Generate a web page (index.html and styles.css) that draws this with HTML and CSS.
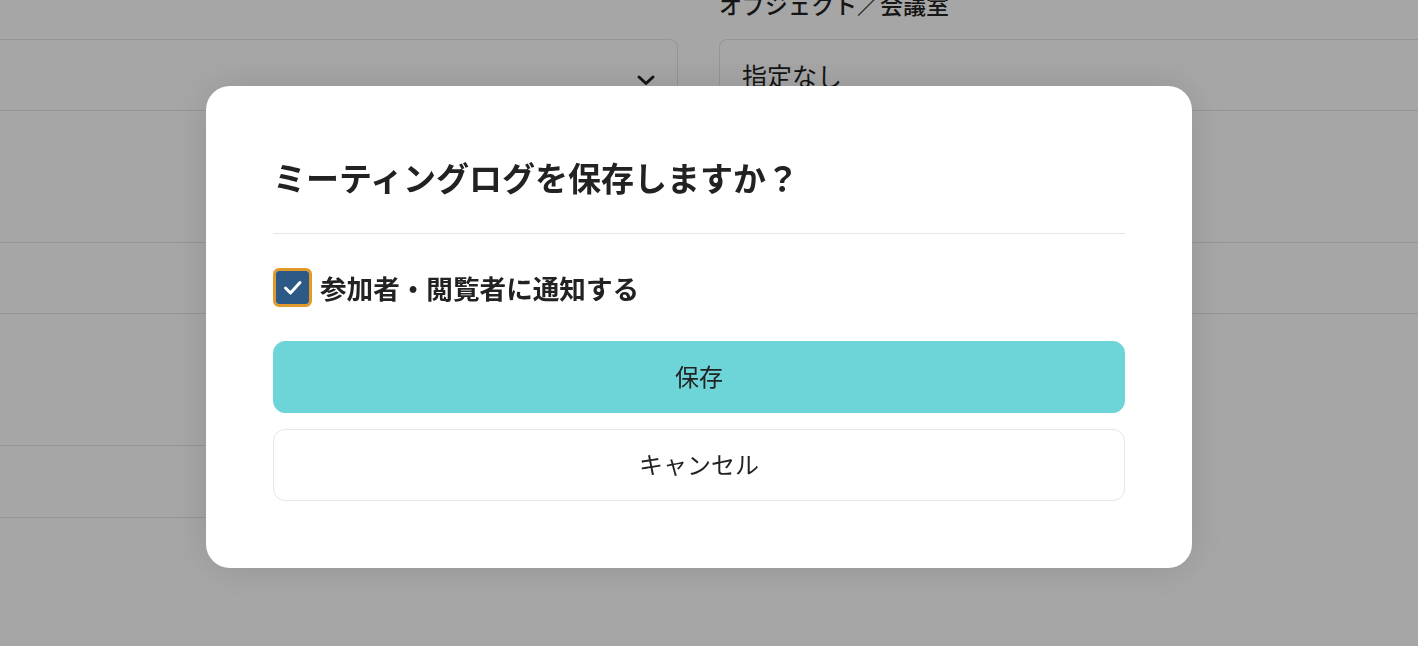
FILE: index.html
```html
<!DOCTYPE html>
<html lang="ja">
<head>
<meta charset="utf-8">
<title>ミーティングログ</title>
<link rel="stylesheet" href="styles.css">
</head>
<body>
<div class="page">
  <div class="form-col col-left">
    <div class="field">
      <div class="label"></div>
      <div class="box select">
        <span class="value"></span>
        <svg class="chevron" viewBox="0 0 20 20" width="20" height="20" aria-hidden="true">
          <path d="M3 7 L10 13.5 L17 7" fill="none" stroke="#1f1f1f" stroke-width="3" stroke-linecap="round" stroke-linejoin="round"/>
        </svg>
      </div>
    </div>
    <div class="field">
      <div class="label"></div>
      <div class="box"></div>
    </div>
    <div class="field">
      <div class="label"></div>
      <div class="box box-tall"></div>
    </div>
  </div>
  <div class="form-col col-right">
    <div class="field">
      <div class="label">オブジェクト／会議室</div>
      <div class="box"><span class="value">指定なし</span></div>
    </div>
    <div class="field">
      <div class="label"></div>
      <div class="box"></div>
    </div>
  </div>
</div>

<div class="overlay">
  <div class="modal" role="dialog" aria-modal="true">
    <h2 class="modal-title">ミーティングログを保存しますか？</h2>
    <hr class="divider">
    <label class="check-row">
      <span class="check-ring">
        <span class="check-box">
          <svg viewBox="0 0 33 33" width="33" height="33" aria-hidden="true">
            <path d="M9.5 17 L14.5 22 L24 11.5" fill="none" stroke="#ffffff" stroke-width="3" stroke-linecap="round" stroke-linejoin="round"/>
          </svg>
        </span>
      </span>
      <span class="check-label">参加者・閲覧者に通知する</span>
    </label>
    <div class="actions">
      <button class="btn btn-primary" type="button">保存</button>
      <button class="btn btn-secondary" type="button">キャンセル</button>
    </div>
  </div>
</div>
</body>
</html>
```

FILE: styles.css
```css
* {
  box-sizing: border-box;
}

html, body {
  margin: 0;
  padding: 0;
  height: 100%;
  overflow: hidden;
  background: #ffffff;
}

body {
  font-family: "Noto Sans CJK JP", "Noto Sans", sans-serif;
  color: #222222;
}

/* Background page */
.page {
  display: flex;
  gap: 41px;
  margin-left: -400px;
  margin-top: -12px;
}

.form-col {
  display: flex;
  flex-direction: column;
  gap: 80px;
}

.col-left {
  width: 1078px;
  flex: none;
}

.col-right {
  width: 1000px;
  flex: none;
}

.field {
  display: flex;
  flex-direction: column;
  gap: 19px;
}

.label {
  height: 32px;
  font-size: 23px;
  line-height: 32px;
  font-weight: 500;
  color: #222222;
  white-space: nowrap;
}

.box {
  height: 72px;
  border: 1px solid #e5e5e5;
  border-radius: 8px;
  display: flex;
  align-items: center;
  padding: 0 22px;
}

.box-tall {
  height: 73px;
}

.select {
  justify-content: space-between;
  padding-right: 21px;
}

.chevron {
  margin-top: 10px;
}

.value {
  font-size: 25px;
  line-height: 32px;
  color: #1f1f1f;
}

/* Overlay + modal */
.overlay {
  position: fixed;
  inset: 0;
  background: rgba(0, 0, 0, 0.35);
  display: flex;
  justify-content: center;
  align-items: center;
  padding: 8px 20px 0 0;
}

.modal {
  width: 986px;
  background: #ffffff;
  border-radius: 24px;
  padding: 67px;
  box-shadow: 0 0 40px rgba(0, 0, 0, 0.12);
}

.modal-title {
  margin: 0;
  font-size: 33px;
  line-height: 48px;
  font-weight: 700;
  color: #222222;
}

.divider {
  margin: 32px 0 0;
  border: 0;
  height: 1px;
  background: #e6e6e6;
}

.check-row {
  margin-top: 34px;
  display: flex;
  align-items: center;
  gap: 8px;
  height: 39px;
}

.check-ring {
  width: 39px;
  height: 39px;
  border: 3px solid #e09a2c;
  border-radius: 6px;
  background: #ffffff;
  display: flex;
  flex: none;
}

.check-box {
  width: 33px;
  height: 33px;
  background: #2c5985;
  border-radius: 3px;
  display: flex;
}

.check-label {
  font-size: 26.6px;
  line-height: 39px;
  font-weight: 700;
  color: #222222;
  padding-bottom: 1px;
}

.actions {
  margin-top: 34px;
  display: flex;
  flex-direction: column;
  gap: 16px;
}

.btn {
  height: 72px;
  width: 100%;
  border-radius: 12px;
  font-family: "Noto Sans CJK JP", "Noto Sans", sans-serif;
  font-size: 24px;
  font-weight: 400;
  color: #222222;
  cursor: pointer;
  padding: 0 0 4px;
}

.btn-primary {
  background: #6dd5d8;
  border: 1px solid #6dd5d8;
}

.btn-secondary {
  background: #ffffff;
  border: 1px solid #e6e6e6;
}
```
